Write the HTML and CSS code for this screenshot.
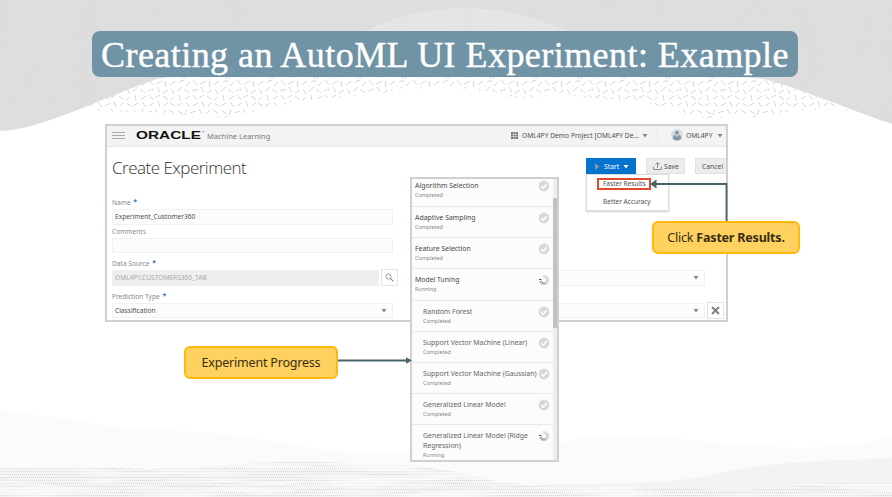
FILE: index.html
```html
<!DOCTYPE html>
<html lang="en">
<head>
<meta charset="utf-8">
<title>Creating an AutoML UI Experiment: Example</title>
<link rel="stylesheet" href="styles.css">
</head>
<body>
<svg width="0" height="0" class="defs">
  <symbol id="check" viewBox="0 0 12 12"><circle cx="6" cy="6" r="5.4" fill="#d6d8da"/><path d="M3.2 6.2l2 2 3.7-4.1" fill="none" stroke="#fff" stroke-width="1.5"/></symbol>
  <symbol id="spin" viewBox="0 0 12 12"><g fill="none" stroke-width="1"><path d="M6 1v2.600" stroke="#bbb"/><path d="M8.500 1.700L7.300 3.900" stroke="#bbb"/><path d="M10.400 3.500L8.200 4.800" stroke="#aaa"/><path d="M11 6H8.500" stroke="#aaa"/><path d="M10.400 8.500L8.200 7.200" stroke="#999"/><path d="M8.500 10.400L7.300 8.200" stroke="#888"/><path d="M6 11V8.400" stroke="#666"/><path d="M3.500 10.400l1.200-2.200" stroke="#555"/><path d="M1.600 8.500l2.200-1.300" stroke="#555"/><path d="M1 5.500h2.500" stroke="#555"/></g></symbol>
  <symbol id="caret" viewBox="0 0 6 5"><path d="M.5 1h5L3 4.600z" fill="currentColor"/></symbol>
</svg>
<svg class="backdrop" viewBox="0 0 892 497">
  <defs>
    <pattern id="sticks" width="44" height="36" patternUnits="userSpaceOnUse">
      <path d="M2 3l5 3M11 1l-2 6M14 5l6-2M23 1l3 5M30 6l4-4M37 2l5 3M3 10l5-2M10 14l4-4M17 8l4 5M24 12l6-3M33 9l1 6M38 13l5-4M1 19l5-4M8 17l5 4M16 19l6-2M25 15l3 5M31 21l5-3M39 17l3 5M3 23l1 6M9 27l5-3M17 23l4 5M23 26l5-3M31 24l5 4M38 28l4-3M1 34l5-3M10 30l4 5M17 34l5-3M26 29l2 6M32 34l4-4M38 31l5 3" fill="none" stroke="#d6d6d6" stroke-width="1"/>
    </pattern>
    <pattern id="weave" width="6" height="6" patternUnits="userSpaceOnUse"><path d="M0 .5h6M1 3.500h6" stroke="#cfcfcf" stroke-width=".8" stroke-dasharray="1 1"/></pattern>
    <filter id="stone" x="0" y="0" width="1" height="1"><feTurbulence type="fractalNoise" baseFrequency=".04 .018" numOctaves="4" seed="4"/><feColorMatrix values="0 0 0 0 .7  0 0 0 0 .7  0 0 0 0 .7  1.6 0 0 0 -.75"/></filter>
    <filter id="streaks" x="0" y="0" width="1" height="1"><feTurbulence type="fractalNoise" baseFrequency=".012 .16" numOctaves="2" seed="9"/><feColorMatrix values="0 0 0 0 1  0 0 0 0 1  0 0 0 0 1  4 0 0 0 -1.5"/></filter>
    <clipPath id="sky"><path d="M0 0H892V124C850 110 815 94 768 80C750 76 730 78 700 77H210C190 77 172 76 157 79C105 96 42 130 0 131Z"/></clipPath>
    <clipPath id="ground"><path d="M0 467L70 467 150 469 210 466 275 461 330 462 400 465 447 470 500 482 560 487 640 486 740 491 810 483 892 484V497H0Z"/></clipPath>
  </defs>
  <rect width="892" height="497" fill="#fff"/>
  <path d="M75 109L150 76H770L850 111 805 110 785 112 755 117 702 118 670 109 640 101 590 98 560 94 520 99 490 92 450 87 400 89 375 95 322 98 278 105 250 112 220 118 185 116 150 112 90 111Z" fill="url(#sticks)"/>
  <g clip-path="url(#sky)">
    <rect width="892" height="140" fill="#dedede"/>
    <path d="M350 38Q462-22 582 38Z" fill="#e5e5e5"/>
    <rect width="892" height="140" filter="url(#stone)" opacity=".28"/>
  </g>
  <path d="M0 410L75 420 120 428 200 432 250 437 330 451 400 453 560 444 580 438 670 438 740 445 800 448 860 445 892 436V497H0Z" fill="#fbfbfb"/>
  <path d="M540 484C650 485 690 480 720 473C770 461 830 461 892 458V497H540Z" fill="#f3f3f3"/>
  <g clip-path="url(#ground)"><rect y="455" width="892" height="42" fill="#f3f3f3"/><rect y="455" width="892" height="42" fill="url(#weave)"/><rect y="455" width="892" height="42" filter="url(#streaks)" opacity=".55"/></g>
</svg>

<main class="slide">
  <h1 class="title"><span>Creating an AutoML UI Experiment: Example</span></h1>

  <section class="app">
    <header class="bar">
      <svg class="burger" viewBox="0 0 13 9"><path d="M0 1.500h13M0 4.500h13M0 7.500h13" stroke="#aaa"/></svg>
      <svg class="logo" viewBox="0 0 70 12"><text x="0" y="9.500" textLength="65" lengthAdjust="spacingAndGlyphs">ORACLE</text><circle cx="67.200" cy="2.600" r=".7" fill="#555"/></svg>
      <span class="product">Machine Learning</span>
      <svg class="apps" viewBox="0 0 7 7"><path d="M0 1h7M0 3.500h7M0 6h7" stroke="#777" stroke-width="1.800" stroke-dasharray="2 .5"/></svg>
      <span class="project">OML4PY Demo Project [OML4PY De...</span>
      <svg class="caret"><use href="#caret"/></svg>
      <i class="rule"></i>
      <svg class="avatar" viewBox="0 0 12 12"><circle cx="6" cy="6" r="6" fill="#d5dde3"/><circle cx="6" cy="3.800" r="2" fill="#8598a8"/><path d="M2 10V8q0-2 2.400-2L6 8l1.600-2Q10 6 10 8v2q-4 3-8 0z" fill="#8598a8"/></svg>
      <span class="user">OML4PY</span>
      <svg class="caret"><use href="#caret"/></svg>
    </header>
    <div class="head">
      <h2>Create Experiment</h2>
      <div class="actions">
        <button class="btn start"><svg viewBox="0 0 5 7"><path d="M0 0l4.500 3.500L0 7z" fill="#7d98ad"/></svg>Start<svg class="caret"><use href="#caret"/></svg></button>
        <button class="btn save"><svg viewBox="0 0 9 8"><path d="M.5 4.500v3h8v-3M4.500 6V.8M2.500 2.700l2-2 2 2" fill="none" stroke="#777" stroke-width=".8"/></svg>Save</button>
        <button class="btn cancel">Cancel</button>
        <div class="menu"><span class="picked">Faster Results</span><span>Better Accuracy</span></div>
      </div>
    </div>
    <div class="form">
      <label>Name <b>*</b></label>
      <div class="row"><div class="input">Experiment_Customer360</div></div>
      <label class="l2">Comments</label>
      <div class="row"><div class="input"></div></div>
      <label class="l3">Data Source <b>*</b></label>
      <div class="row"><div class="input off">OML4PY.CUSTOMERS360_TAB</div><div class="sq"><svg viewBox="0 0 9 9"><circle cx="3.500" cy="3.500" r="2.600" fill="none" stroke="#888" stroke-width=".8"/><path d="M5.400 5.400l3 3" stroke="#888" stroke-width="1.200"/></svg></div><div class="input right"><svg class="caret"><use href="#caret"/></svg></div></div>
      <label class="l4">Prediction Type <b>*</b></label>
      <div class="row"><div class="input">Classification<svg class="caret"><use href="#caret"/></svg></div><div class="input right far"><svg class="caret"><use href="#caret"/></svg></div><div class="sq"><svg viewBox="0 0 9 9"><path d="M1 1l7 7M8 1L1 8" stroke="#808080" stroke-width="2"/></svg></div></div>
    </div>
  </section>

  <section class="progress">
    <ul>
      <li><div><p>Algorithm Selection</p><small>Completed</small></div><svg><use href="#check"/></svg></li>
      <li><div><p>Adaptive Sampling</p><small>Completed</small></div><svg><use href="#check"/></svg></li>
      <li><div><p>Feature Selection</p><small>Completed</small></div><svg><use href="#check"/></svg></li>
      <li><div><p>Model Tuning</p><small>Running</small></div><svg><use href="#spin"/></svg></li>
      <li class="sub"><div><p>Random Forest</p><small>Completed</small></div><svg><use href="#check"/></svg></li>
      <li class="sub"><div><p>Support Vector Machine (Linear)</p><small>Completed</small></div><svg><use href="#check"/></svg></li>
      <li class="sub"><div><p>Support Vector Machine (Gaussian)</p><small>Completed</small></div><svg><use href="#check"/></svg></li>
      <li class="sub"><div><p>Generalized Linear Model</p><small>Completed</small></div><svg><use href="#check"/></svg></li>
      <li class="sub"><div><p>Generalized Linear Model (Ridge<br>Regression)</p><small>Running</small></div><svg><use href="#spin"/></svg></li>
    </ul>
    <div class="track"><i></i></div>
  </section>

  <svg class="arrows" viewBox="0 0 892 497"><path d="M726.500 223V184H655M337 360.500H407" fill="none" stroke="#46656b" stroke-width="1.800"/><path d="M650 184l6.500-4.500v9zM412 360.500l-6-3.200v6.400z" fill="#46656b"/></svg>
  <div class="note click"><span>Click <b>Faster Results.</b></span></div>
  <div class="note exp"><span>Experiment Progress</span></div>
</main>
</body>
</html>
```
FILE: styles.css
```css
* { box-sizing: border-box; margin: 0; padding: 0; }
body { width: 892px; height: 497px; overflow: hidden; background: #fff; font-family: "Noto Sans", "Open Sans", sans-serif; }
svg { display: block; flex: none; }
.defs { position: absolute; }
.backdrop, .arrows { position: absolute; left: 0; top: 0; width: 892px; height: 497px; }
.slide { position: relative; width: 892px; height: 497px; padding-top: 31px; }
.title { width: 706px; height: 46px; margin-left: 92px; border-radius: 8px; background: #7193a6; color: #fff; font: 400 36px/46px "Liberation Serif", serif; white-space: nowrap; padding-left: 9px; letter-spacing: .45px; -webkit-text-stroke: .4px #fff; }
.title span { position: relative; top: 1px; }

.app { width: 623px; height: 198px; margin: 47px 0 0 105px; border: 2px solid #d4cfcc; background: #fff; overflow: hidden; color: #505050; font-size: 7px; white-space: nowrap; }
.bar { display: flex; align-items: center; height: 21px; background: #f3f3f3; border-bottom: 1px solid #e6e6e6; padding-left: 5px; }
.burger { width: 13px; height: 9px; margin-top: -2px; }
.logo { width: 70px; height: 12px; margin: -2px 0 0 11px; overflow: visible; }
.logo text { font: 700 11px "Liberation Sans", sans-serif; fill: #111; }
.product { width: 304px; margin-left: 1px; font-size: 7.500px; color: #777; }
.apps { width: 7px; height: 7px; margin-top: -2px; }
.project { width: 119px; margin: -2px 0 0 4px; font-size: 6.700px; }
.caret { width: 6px; height: 5px; color: #888; }
.bar .caret { margin: -2px 0 0 1px; }
.rule { width: 1px; height: 12px; margin: -2px 13px 0 9px; background: #e6e6e6; }
.avatar { width: 12px; height: 12px; margin-top: -2px; }
.user { width: 28px; margin: -2px 2px 0 3px; font-size: 6.700px; }
.head { display: flex; justify-content: space-between; height: 49px; padding-left: 5px; }
.head h2 { font: 300 17px/24px "Open Sans", sans-serif; letter-spacing: -.5px; padding-top: 9px; color: #333; }
.actions { position: relative; display: flex; width: 140px; padding-top: 11px; }
.btn { display: flex; flex: none; align-items: center; height: 16px; border: 1px solid #e2e2e2; background: #ececec; color: #505050; font: 6.800px "Noto Sans", sans-serif; }
.start { width: 50px; background: #0572ce; border-color: #0572ce; color: #fff; padding-left: 8px; }
.start svg:first-child { width: 5px; height: 7px; margin-right: 4px; }
.start .caret { color: #fff; margin-left: 4px; }
.save { width: 39px; margin-left: 10px; padding-left: 6px; }
.save svg { width: 9px; height: 8px; margin-right: 2px; }
.cancel { width: 40px; margin-left: 10px; padding-left: 6px; }
.menu { position: absolute; left: 0; top: 27px; width: 83px; height: 37px; background: #fff; border: 1px solid #ddd; box-shadow: 0 1px 2px #0003; padding: 3px 0 0 10px; display: flex; flex-direction: column; align-items: flex-start; font-size: 6.500px; line-height: 9px; }
.menu span { padding-left: 6px; }
.menu .picked { width: 54px; height: 12px; border: 2px solid #dc4a30; padding-left: 4px; line-height: 8px; margin-bottom: 7px; }

.form { padding-left: 5px; color: #505050; font-size: 6.600px; }
.form label { display: block; height: 13px; line-height: 13px; color: #888; }
.form label b { position: relative; top: -1px; margin-left: 1px; color: #3a78b5; font-size: 7px; line-height: 1px; }
.form label.l2 { height: 13px; line-height: 14px; }
.form label.l3 { height: 17px; line-height: 21px; }
.form label.l4 { height: 17px; line-height: 21px; }
.row { display: flex; align-items: center; height: 15.500px; }
.input { display: flex; align-items: center; justify-content: space-between; flex: none; width: 281px; height: 15.500px; border: 1px solid #f1f1f1; background: #fcfcfc; padding: 0 5px 0 2px; }
.input.off { width: 267px; background: #efefef; color: #aaa; }
.input .caret { margin-left: auto; }
.sq { display: grid; place-items: center; width: 17px; height: 17px; margin-left: 2px; border: 1px solid #e4e4e4; background: #fff; }
.sq svg { width: 9px; height: 9px; }
.right { width: 293px; margin-left: 14px; }
.far { margin-left: 19px; }

.progress { position: absolute; left: 410px; top: 177px; width: 149px; height: 285px; display: flex; border: 2px solid #d4cfcc; background: #fcfcfc; overflow: hidden; }
.progress ul { width: 141px; list-style: none; }
.progress li { display: flex; justify-content: space-between; height: 31.200px; border-bottom: 1px solid #e8e8e8; padding: 2px 3px 0 3px; color: #484848; font-size: 6.900px; white-space: nowrap; }
.progress li:first-child { height: 28px; padding-top: 0; }
.progress li:last-child { border: 0; }
.progress li > svg { width: 12px; height: 12px; margin: 0 0 0 -10px; }
.progress li:not(:first-child) > svg { margin-top: 3px; }
.progress li:first-child > svg { margin-top: 1px; }
.progress p { line-height: 10px; padding-top: 2px; }
.progress li:not(:first-child) p { padding-top: 4px; }
.progress small { display: block; font-size: 5.400px; line-height: 9px; color: #888; }
.progress .sub { padding-left: 11px; color: #666; }
.track { width: 4px; height: 100%; background: #eee; padding-top: 19px; }
.track i { display: block; height: 130px; background: #c4c2c1; }

.note { position: absolute; display: flex; align-items: center; justify-content: center; border: 2px solid #ffb90a; border-radius: 6px; background: #ffd260; color: #3a2d16; font-size: 12.500px; letter-spacing: -.2px; white-space: nowrap; }
.click { left: 652px; top: 221px; width: 148px; height: 33px; }
.exp { left: 184px; top: 346px; width: 154px; height: 33px; }
```
